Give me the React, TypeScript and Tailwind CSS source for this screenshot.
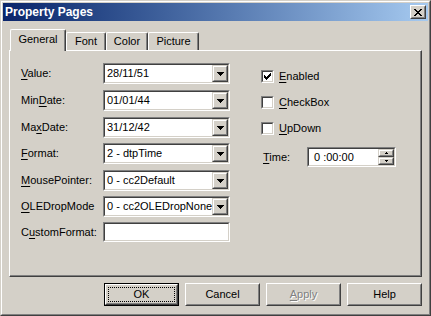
import type { ReactNode } from 'react'

// classic win2k palette
// face #d4d0c8, shadow #808080, dark #404040, highlight #fff

function U({ children }: { children: ReactNode }) {
  return <span className="underline underline-offset-[2px]">{children}</span>
}

function DownArrow() {
  return (
    <svg width="7" height="4" viewBox="0 0 7 4" className="block">
      <rect x="0" y="0" width="7" height="1" fill="#000" />
      <rect x="1" y="1" width="5" height="1" fill="#000" />
      <rect x="2" y="2" width="3" height="1" fill="#000" />
      <rect x="3" y="3" width="1" height="1" fill="#000" />
    </svg>
  )
}

function Combo({ value }: { value: string }) {
  return (
    <div className="w-[127px] h-[21px] border border-t-[#808080] border-l-[#808080] border-r-white border-b-white">
      <div className="h-full border border-t-[#404040] border-l-[#404040] border-r-[#d4d0c8] border-b-[#d4d0c8] bg-white flex">
        <div className="flex-1 pl-[2px] leading-[17px] whitespace-nowrap overflow-hidden">{value}</div>
        <div className="w-[16px] h-full border border-t-[#d4d0c8] border-l-[#d4d0c8] border-r-[#404040] border-b-[#404040]">
          <div className="h-full border border-t-white border-l-white border-r-[#808080] border-b-[#808080] bg-[#d4d0c8] flex items-center justify-center">
            <DownArrow />
          </div>
        </div>
      </div>
    </div>
  )
}

function Check({ checked, label }: { checked?: boolean; label: ReactNode }) {
  return (
    <div className="flex items-center h-[13px]">
      <div className="w-[13px] h-[13px] border border-t-[#808080] border-l-[#808080] border-r-white border-b-white">
        <div className="h-full border border-t-[#404040] border-l-[#404040] border-r-[#d4d0c8] border-b-[#d4d0c8] bg-white">
          {checked && (
            <svg width="9" height="9" viewBox="0 0 9 9" className="block">
              <rect x="7" y="1" width="1" height="1" />
              <rect x="6" y="2" width="2" height="1" />
              <rect x="1" y="3" width="1" height="1" />
              <rect x="5" y="3" width="3" height="1" />
              <rect x="1" y="4" width="2" height="1" />
              <rect x="4" y="4" width="3" height="1" />
              <rect x="1" y="5" width="5" height="1" />
              <rect x="2" y="6" width="3" height="1" />
              <rect x="3" y="7" width="1" height="1" />
            </svg>
          )}
        </div>
      </div>
      <span className="ml-[5px] leading-[13px]">{label}</span>
    </div>
  )
}

function SpinHalf({ up }: { up?: boolean }) {
  return (
    <div className="h-[8px] border border-t-[#d4d0c8] border-l-[#d4d0c8] border-r-[#404040] border-b-[#404040]">
      <div className="h-full border border-t-white border-l-white border-r-[#808080] border-b-[#808080] bg-[#d4d0c8] flex items-center justify-center">
        <svg width="3" height="2" viewBox="0 0 3 2" className={up ? 'block' : 'block rotate-180'}>
          <rect x="1" y="0" width="1" height="1" />
          <rect x="0" y="1" width="3" height="1" />
        </svg>
      </div>
    </div>
  )
}

function PushButton({
  children,
  isDefault,
  disabled,
}: {
  children: ReactNode
  isDefault?: boolean
  disabled?: boolean
}) {
  if (isDefault) {
    return (
      <div className="w-[75px] h-[23px] border border-black">
        <div className="h-full border border-t-white border-l-white border-r-[#404040] border-b-[#404040]">
          <div className="h-full border border-t-[#d4d0c8] border-l-[#d4d0c8] border-r-[#808080] border-b-[#808080] p-[1px]">
            <div className="h-full border border-dotted border-black flex items-center justify-center">
              {children}
            </div>
          </div>
        </div>
      </div>
    )
  }
  return (
    <div className="w-[75px] h-[23px] border border-t-white border-l-white border-r-[#404040] border-b-[#404040]">
      <div
        className={`h-full border border-t-[#d4d0c8] border-l-[#d4d0c8] border-r-[#808080] border-b-[#808080] flex items-center justify-center ${
          disabled ? 'text-[#808080] [text-shadow:1px_1px_0_#fff]' : ''
        }`}
      >
        {children}
      </div>
    </div>
  )
}

const TABS = [
  { name: 'General', w: 'w-[56px]', selected: true },
  { name: 'Font', w: 'w-[40px]' },
  { name: 'Color', w: 'w-[42px]' },
  { name: 'Picture', w: 'w-[51px]' },
]

export default function App() {
  return (
    <div className="w-[431px] h-[316px] bg-[#d4d0c8] text-[11px] text-black font-['Liberation_Sans',Arial,sans-serif] border border-t-[#d4d0c8] border-l-[#d4d0c8] border-r-[#404040] border-b-[#404040]">
      <div className="h-full border border-t-white border-l-white border-r-[#808080] border-b-[#808080] p-px flex flex-col">
        {/* Title bar */}
        <div className="h-[18px] bg-gradient-to-r from-[#0a246a] to-[#a6caf0] flex items-center pl-[2px] pr-[2px] shrink-0">
          <span className="flex-1 text-white font-bold text-[12px] leading-none">Property Pages</span>
          <div className="w-[16px] h-[14px] border border-t-white border-l-white border-r-[#404040] border-b-[#404040]">
            <div className="h-full border border-t-[#d4d0c8] border-l-[#d4d0c8] border-r-[#808080] border-b-[#808080] bg-[#d4d0c8] flex items-center justify-center">
              <svg width="8" height="7" viewBox="0 0 8 7" className="block">
                <rect x="0" y="0" width="2" height="1" />
                <rect x="6" y="0" width="2" height="1" />
                <rect x="1" y="1" width="2" height="1" />
                <rect x="5" y="1" width="2" height="1" />
                <rect x="2" y="2" width="4" height="1" />
                <rect x="3" y="3" width="2" height="1" />
                <rect x="2" y="4" width="4" height="1" />
                <rect x="1" y="5" width="2" height="1" />
                <rect x="5" y="5" width="2" height="1" />
                <rect x="0" y="6" width="2" height="1" />
                <rect x="6" y="6" width="2" height="1" />
              </svg>
            </div>
          </div>
        </div>

        {/* Body */}
        <div className="flex-1 px-[6px] pt-[8px]">
          {/* Tabs */}
          <div className="h-[21px] flex items-end pl-[1px] relative z-10">
            {TABS.map((t) =>
              t.selected ? (
                <div
                  key={t.name}
                  className={`${t.w} h-[22px] -mb-[1px] bg-[#d4d0c8] border-l border-t border-white rounded-tl-[2px] rounded-tr-[2px] shadow-[inset_-1px_0_0_#808080] border-r border-r-[#404040] flex items-center justify-center pb-[2px]`}
                >
                  {t.name}
                </div>
              ) : (
                <div
                  key={t.name}
                  className={`${t.w} h-[18px] bg-[#d4d0c8] border-l border-t border-white rounded-tl-[2px] rounded-tr-[2px] shadow-[inset_-1px_0_0_#808080] border-r border-r-[#404040] flex items-center justify-center`}
                >
                  {t.name}
                </div>
              )
            )}
          </div>

          {/* Panel */}
          <div className="h-[227px] border-l border-t border-white border-r border-r-[#404040] border-b border-b-[#404040] shadow-[inset_-1px_-1px_0_#808080] pt-[12px] pl-[11px] flex">
            <div className="flex flex-col">
              <div className="flex items-center">
                <span className="w-[82px]"><U>V</U>alue:</span>
                <Combo value="28/11/51" />
              </div>
              <div className="flex items-center mt-[6px]">
                <span className="w-[82px]">Min<U>D</U>ate:</span>
                <Combo value="01/01/44" />
              </div>
              <div className="flex items-center mt-[6px]">
                <span className="w-[82px]">Ma<U>x</U>Date:</span>
                <Combo value="31/12/42" />
              </div>
              <div className="flex items-center mt-[5px]">
                <span className="w-[82px]"><U>F</U>ormat:</span>
                <Combo value="2 - dtpTime" />
              </div>
              <div className="flex items-center mt-[6px]">
                <span className="w-[82px]"><U>M</U>ousePointer:</span>
                <Combo value="0 - cc2Default" />
              </div>
              <div className="flex items-center mt-[5px]">
                <span className="w-[82px]"><U>O</U>LEDropMode</span>
                <Combo value="0 - cc2OLEDropNone" />
              </div>
              <div className="flex items-center mt-[5px]">
                <span className="w-[82px]">C<U>u</U>stomFormat:</span>
                <div className="w-[127px] h-[20px] border border-t-[#808080] border-l-[#808080] border-r-white border-b-white">
                  <div className="h-full border border-t-[#404040] border-l-[#404040] border-r-[#d4d0c8] border-b-[#d4d0c8] bg-white" />
                </div>
              </div>
            </div>

            <div className="ml-[31px] pt-[7px] flex flex-col">
              <Check checked label={<><U>E</U>nabled</>} />
              <div className="mt-[13px]">
                <Check label={<><U>C</U>heckBox</>} />
              </div>
              <div className="mt-[13px]">
                <Check label={<><U>U</U>pDown</>} />
              </div>
              <div className="mt-[12px] flex items-center">
                <span className="w-[46px] pl-[2px]"><U>T</U>ime:</span>
                <div className="w-[89px] h-[20px] border border-t-[#808080] border-l-[#808080] border-r-white border-b-white">
                  <div className="h-full border border-t-[#404040] border-l-[#404040] border-r-[#d4d0c8] border-b-[#d4d0c8] bg-white flex">
                    <div className="flex-1 pl-[5px] leading-[16px] whitespace-nowrap">0 :00:00</div>
                    <div className="w-[16px] flex flex-col">
                      <SpinHalf up />
                      <SpinHalf />
                    </div>
                  </div>
                </div>
              </div>
            </div>
          </div>

          {/* Buttons */}
          <div className="mt-[6px] flex justify-end gap-[6px]">
            <PushButton isDefault>OK</PushButton>
            <PushButton>Cancel</PushButton>
            <PushButton disabled>
              <U>A</U>pply
            </PushButton>
            <PushButton>Help</PushButton>
          </div>
        </div>
      </div>
    </div>
  )
}
